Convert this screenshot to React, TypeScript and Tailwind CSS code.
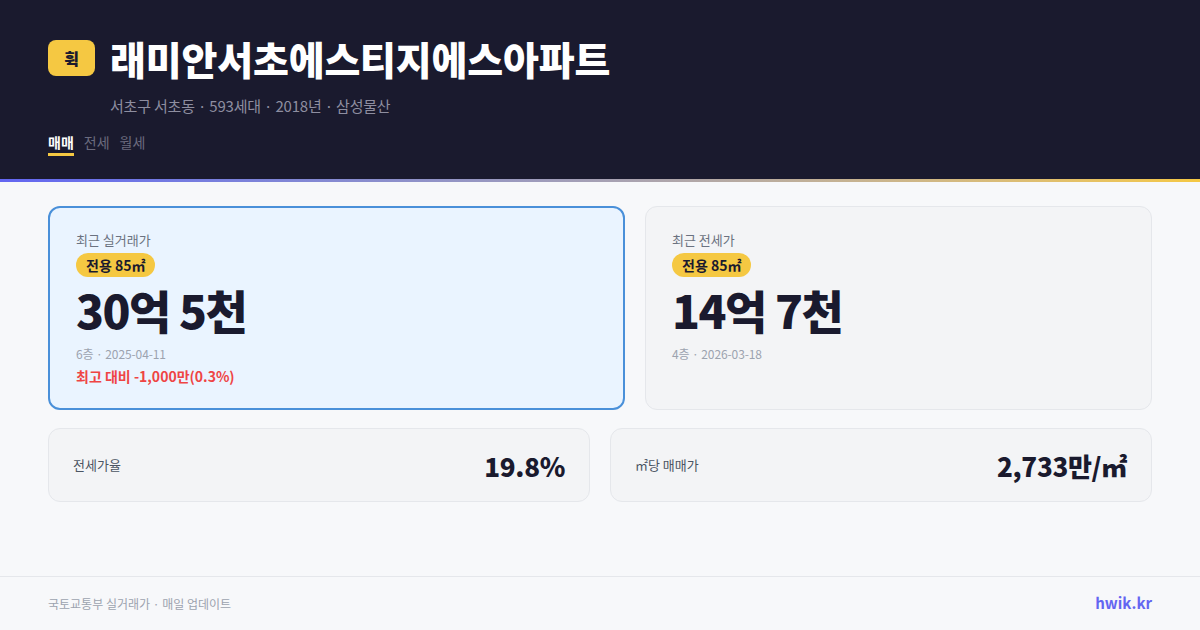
import React from "react"

const font = { fontFamily: '"Noto Sans CJK KR", "Noto Sans", sans-serif' }

const AreaBadge = () => (
  <span className="inline-flex h-6 items-center rounded-full bg-[#f5c842] px-[10px] text-[14px] font-bold leading-none text-[#1a1a2e]">
    전용 85㎡
  </span>
)

interface PriceCardProps {
  label: string
  price: string
  meta: string
  diff?: string
  highlight?: boolean
  className?: string
}

const PriceCard = ({ label, price, meta, diff, highlight, className }: PriceCardProps) => (
  <div
    className={`flex flex-col rounded-xl ${
      highlight ? "border-2 border-[#4a90d9] bg-[#eaf4ff] px-[26px] pt-[22px]" : "border border-[#e5e7eb] bg-[#f3f4f6] px-[26px] pt-[23px]"
    } ${className ?? ""}`}
  >
    <p className="text-[13px] leading-5 text-[#6b7280]">{label}</p>
    <div className="mt-[2px]">
      <AreaBadge />
    </div>
    <p className="mt-[2px] text-[46px] font-black leading-[60px] tracking-[-1.5px] text-[#1a1a2e]">{price}</p>
    <p className="mt-[5px] text-[12px] leading-5 tracking-[-0.1px] text-[#9ca3af]">{meta}</p>
    {diff ? <p className="mt-[2px] text-[14px] font-semibold leading-5 text-[#ef4444]">{diff}</p> : null}
  </div>
)

const StatCard = ({ label, value }: { label: string; value: string }) => (
  <div className="flex h-[74px] flex-1 items-center justify-between rounded-xl border border-[#e5e7eb] bg-[#f3f4f6] px-6">
    <span className="text-[13px] text-[#4b5563]">{label}</span>
    <span className="text-[26px] font-black tracking-[-0.3px] text-[#1a1a2e]">{value}</span>
  </div>
)

export default function App() {
  return (
    <div className="flex h-[630px] w-[1200px] flex-col overflow-hidden bg-[#f7f8fa]" style={font}>
      <header className="h-[179px] bg-[#1a1a2e] px-12 pt-[35px]">
        <div className="flex items-center gap-[15px]">
          <span className="flex h-[36px] w-[47px] items-center justify-center rounded-lg bg-[#f5c842] text-[16px] font-black text-[#1a1a2e]">
            휙
          </span>
          <h1 className="text-[39px] font-black leading-[46px] tracking-[-0.15px] text-white">래미안서초에스티지에스아파트</h1>
        </div>
        <p className="mt-[15px] pl-[62px] text-[15px] leading-5 tracking-[-0.2px] text-[#8e8ea0]">
          서초구 서초동 · 593세대 · 2018년 · 삼성물산
        </p>
        <nav className="mt-[16px] flex gap-[10px] text-[14px] leading-5">
          <span className="border-b-[3px] border-[#f5c842] pb-[1px] font-bold text-white">매매</span>
          <span className="text-[#6b6b7e]">전세</span>
          <span className="text-[#6b6b7e]">월세</span>
        </nav>
      </header>
      <div className="h-[3px] bg-gradient-to-r from-[#6366f1] to-[#f5c842]" />

      <main className="flex flex-1 flex-col gap-[18px] px-12 pt-[24px]">
        <div className="flex h-[204px] gap-5">
          <PriceCard
            highlight
            className="w-[577px]"
            label="최근 실거래가"
            price="30억 5천"
            meta="6층 · 2025-04-11"
            diff="최고 대비 -1,000만(0.3%)"
          />
          <PriceCard className="flex-1" label="최근 전세가" price="14억 7천" meta="4층 · 2026-03-18" />
        </div>
        <div className="flex gap-5">
          <StatCard label="전세가율" value="19.8%" />
          <StatCard label="㎡당 매매가" value="2,733만/㎡" />
        </div>
      </main>

      <footer className="flex h-[54px] items-center justify-between border-t border-[#e5e7eb] px-12">
        <span className="text-[12px] text-[#9ca3af]">국토교통부 실거래가 · 매일 업데이트</span>
        <span className="text-[15px] font-bold text-[#6366f1]">hwik.kr</span>
      </footer>
    </div>
  )
}
